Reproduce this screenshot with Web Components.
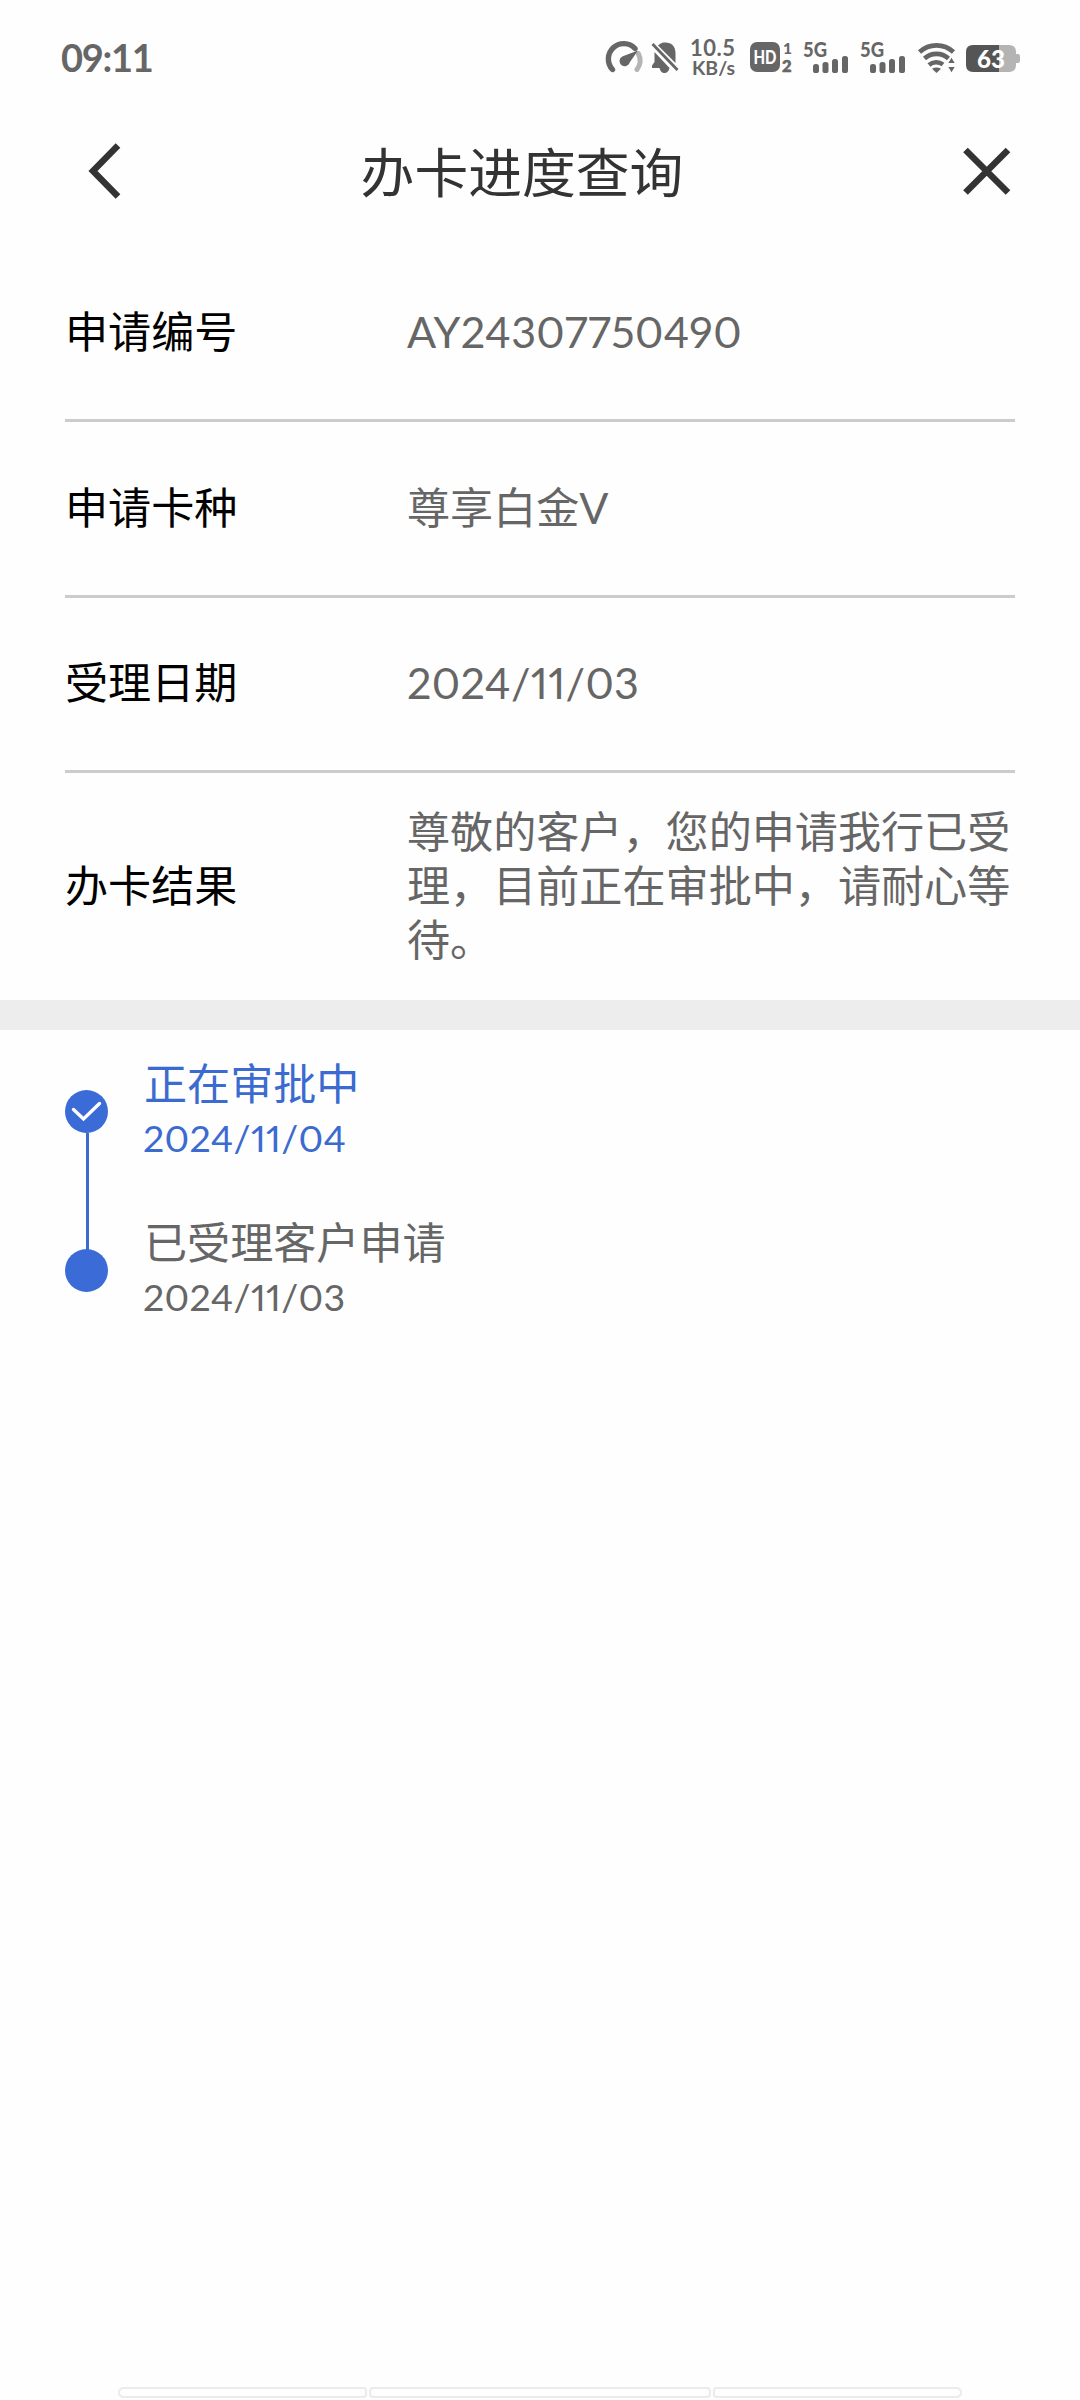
<!DOCTYPE html>
<html lang="zh-CN">
<head>
<meta charset="utf-8">
<title>办卡进度查询</title>
<style>
  html, body { margin: 0; }
  body {
    background: #fefefe;
    font-family: Lato, "Noto Sans CJK SC", sans-serif;
    font-size: 43.1px;
    color: #666;
  }
</style>
</head>
<body>
<app-page>
  <status-bar slot="top" time="09:11"></status-bar>
  <nav-header slot="top">办卡进度查询</nav-header>

  <detail-row label="申请编号"><number-text>AY24307750490</number-text></detail-row>
  <detail-row label="申请卡种">尊享白金V</detail-row>
  <detail-row label="受理日期"><number-text>2024/11/03</number-text></detail-row>
  <detail-row label="办卡结果" last>尊敬的客户，您的申请我行已受理，目前正在审批中，请耐心等待。</detail-row>

  <progress-step slot="steps" date="2024/11/04" current>正在审批中</progress-step>
  <progress-step slot="steps" date="2024/11/03">已受理客户申请</progress-step>

  <bottom-hint slot="bottom"></bottom-hint>
</app-page>

<script>
// small helper: open shadow root + markup
function render(el, html) {
  el.attachShadow({ mode: "open" }).innerHTML = html;
}

class AppPage extends HTMLElement {
  constructor() {
    super();
    render(this, `
      <style>
        :host { display: flex; flex-direction: column; height: 2400px; overflow: hidden; }
        .details { padding: 16.5px 65px 0; }
        .band { height: 30px; background: #ededed; }
        .steps { padding: 27px 65px 0; }
        .bottom { margin-top: auto; }
      </style>
      <slot name="top"></slot>
      <div class="details"><slot></slot></div>
      <div class="band"></div>
      <div class="steps"><slot name="steps"></slot></div>
      <div class="bottom"><slot name="bottom"></slot></div>
    `);
  }
}
customElements.define("app-page", AppPage);

class StatusBar extends HTMLElement {
  constructor() {
    super();
    const signal = `
      <svg class="signal" width="46" height="34" viewBox="0 0 46 34">
        <text x="0" y="17" font-size="20.5" font-weight="900" textLength="24" lengthAdjust="spacingAndGlyphs">5G</text>
        <rect x="10" y="24" width="6" height="9" rx="2.6"/>
        <rect x="19.5" y="22" width="6" height="11" rx="2.6"/>
        <rect x="29" y="19" width="6" height="14" rx="2.6"/>
        <rect x="39" y="16" width="6" height="17" rx="2.6"/>
      </svg>`;
    render(this, `
      <style>
        :host { display: flex; align-items: center; height: 114px; padding: 0 59px 0 61px; color: #666; }
        .time { font-size: 38px; font-weight: 700; line-height: 48px; letter-spacing: -1.3px; margin-right: auto; }
        svg { display: block; overflow: visible; fill: #666; font-family: Lato, sans-serif; }
        .bell { margin-left: 8px; }
        .speed { margin-left: 11px; }
        .hd { margin-left: 14px; }
        .signal { margin-left: 10px; }
        .signal + .signal { margin-left: 11px; }
        .wifi { margin-left: 12px; }
        .battery { margin-left: 10px; }
      </style>
      <span class="time">${this.getAttribute("time")}</span>
      <svg width="37" height="34" viewBox="0 0 37 34">
        <path d="M6.5 29.5A15.2 15.2 0 0 1 29 8.5" fill="none" stroke="#666" stroke-width="5.4" stroke-linecap="round"/>
        <path d="M32.3 13.5A15.2 15.2 0 0 1 31 29.5" fill="none" stroke="#b4b4b4" stroke-width="5" stroke-linecap="round"/>
        <path d="M32 10.5L23.8 22.3A5.2 5.2 0 1 1 16.8 16.2Z"/>
      </svg>
      <svg class="bell" width="28" height="34" viewBox="0 0 28 34">
        <path d="M7 5.5C9.5 3 12 2.500 14.500 2.500C20.500 2.500 24.500 6.500 24.500 13V23ZM3.500 12L18.500 28H1V25.500L3.500 22ZM8.500 28H18.500C17.500 32 15.500 33 13.500 33S9.500 32 8.500 28Z"/>
        <path d="M1.500 4L26.500 30" fill="none" stroke="#666" stroke-width="2.800"/>
      </svg>
      <svg class="speed" width="46" height="38" viewBox="0 0 46 38">
        <text x="0" y="18" font-size="22" font-weight="700" textLength="45" lengthAdjust="spacing">10.5</text>
        <text x="2" y="36.500" font-size="18.500" font-weight="700" textLength="43" lengthAdjust="spacingAndGlyphs">KB/s</text>
      </svg>
      <svg class="hd" width="43" height="34" viewBox="0 0 43 34">
        <rect x="0" y="2" width="30" height="30" rx="7"/>
        <text x="3.500" y="23.500" font-size="18" font-weight="900" fill="#fff" textLength="23" lengthAdjust="spacingAndGlyphs">HD</text>
        <text x="33" y="14" font-size="15.500" font-weight="900">1</text>
        <text x="32" y="32" font-size="16.500" font-weight="900" stroke="#666" stroke-width=".6">2</text>
      </svg>
      ${signal}
      ${signal}
      <svg class="wifi" width="38" height="34" viewBox="0 0 38 34">
        <g fill="none" stroke="#666" stroke-width="4.600">
          <path d="M1.500 12A25 25 0 0 1 35.500 12"/>
          <path d="M6.500 18.500A18 18 0 0 1 30.500 18.500"/>
          <path d="M11 25A11 11 0 0 1 25 24.500"/>
        </g>
        <path d="M18.500 33L14 28.800Q18.500 26 23 28.800Z"/>
        <path d="M33.500 17L37.500 23.500H29.500ZM33.500 33L29.500 26.500H37.500Z" stroke="#fefefe" stroke-width="1"/>
      </svg>
      <svg class="battery" width="55" height="34" viewBox="0 0 55 34">
        <path d="M33 5H43Q50 5 50 12V14H52Q54 14 54 16V21Q54 23 52 23H50V25Q50 32 43 32H33Z" fill="#b4b4b4"/>
        <path d="M33 5H7Q0 5 0 12V25Q0 32 7 32H33Z" fill="#555"/>
        <text x="11" y="27.500" font-size="25" font-weight="900" fill="#fff" textLength="28" lengthAdjust="spacingAndGlyphs">63</text>
      </svg>
    `);
  }
}
customElements.define("status-bar", StatusBar);

class NavHeader extends HTMLElement {
  constructor() {
    super();
    render(this, `
      <style>
        :host { display: flex; align-items: center; justify-content: space-between; height: 116px; padding: 0 67px 0 84px; color: #333; }
        h1 { margin: 0 36px 0 -5px; font-size: 53.8px; font-weight: 400; line-height: 64px; }
        svg { display: block; fill: none; stroke: #333; stroke-width: 6.5; }
      </style>
      <svg width="40" height="60" viewBox="0 0 40 60"><path d="M34 3.500L9 29L34 54.500"/></svg>
      <h1><slot></slot></h1>
      <svg width="52" height="60" viewBox="0 0 52 60"><path d="M4.500 8L47 50.500M47 8L4.500 50.500"/></svg>
    `);
  }
}
customElements.define("nav-header", NavHeader);

// label on the left, value passed in the slot
class DetailRow extends HTMLElement {
  constructor() {
    super();
    render(this, `
      <style>
        :host { display: flex; align-items: center; box-sizing: border-box; height: 175.5px; padding-bottom: 3px; border-bottom: 3px solid #ccc; line-height: 54px; }
        :host([last]) { height: 227px; border-bottom: 0; }
        .label { width: 342px; flex: none; color: #000; }
        .value { flex: 1; }
      </style>
      <div class="label">${this.getAttribute("label")}</div>
      <div class="value"><slot></slot></div>
    `);
  }
}
customElements.define("detail-row", DetailRow);

// numbers and dates, set slightly wider
class NumberText extends HTMLElement {
  constructor() {
    super();
    render(this, `
      <style>
        :host { display: inline; font-feature-settings: "pnum"; letter-spacing: .35px; }
      </style>
      <slot></slot>
    `);
  }
}
customElements.define("number-text", NumberText);

class ProgressStep extends HTMLElement {
  constructor() {
    super();
    const current = this.hasAttribute("current");
    render(this, `
      <style>
        :host { display: flex; height: 159px; line-height: 54px; }
        :host([current]) { color: #3b6bd0; }
        .track { width: 43px; padding-top: 33px; margin-right: 36px; display: flex; flex-direction: column; align-items: center; }
        .dot { display: block; flex: none; }
        .line { flex: none; width: 3px; height: 118px; margin-left: 2px; background: #3b6bd0; }
        .title { margin: -1px 0 1px; }
        .date { font-size: 37.5px; margin-left: -1px; }
      </style>
      <div class="track">
        <svg class="dot" width="43" height="43" viewBox="0 0 43 43">
          <circle cx="21.5" cy="21.5" r="21.5" fill="#3b6bd6"/>
          ${current ? '<path d="M8.5 19.5L18.5 29L34.5 13.5" fill="none" stroke="#fff" stroke-width="3.4" stroke-linecap="round"/>' : ""}
        </svg>
        ${current ? '<div class="line"></div>' : ""}
      </div>
      <div>
        <div class="title"><slot></slot></div>
        <div class="date"><number-text>${this.getAttribute("date")}</number-text></div>
      </div>
    `);
  }
}
customElements.define("progress-step", ProgressStep);

// three outlined pills at the bottom edge
class BottomHint extends HTMLElement {
  constructor() {
    super();
    render(this, `
      <style>
        :host { display: flex; gap: 2px; padding: 0 118px 2px 118px; }
        i { box-sizing: border-box; height: 11px; border: 2px solid #ebebeb; border-radius: 4px; width: 249px; }
        i:nth-of-type(2) { flex: 1; }
        i:first-of-type { border-radius: 6px 4px 4px 6px; }
        i:last-of-type { border-radius: 4px 6px 6px 4px; }
      </style>
      <i></i><i></i><i></i>
    `);
  }
}
customElements.define("bottom-hint", BottomHint);
</script>
</body>
</html>
